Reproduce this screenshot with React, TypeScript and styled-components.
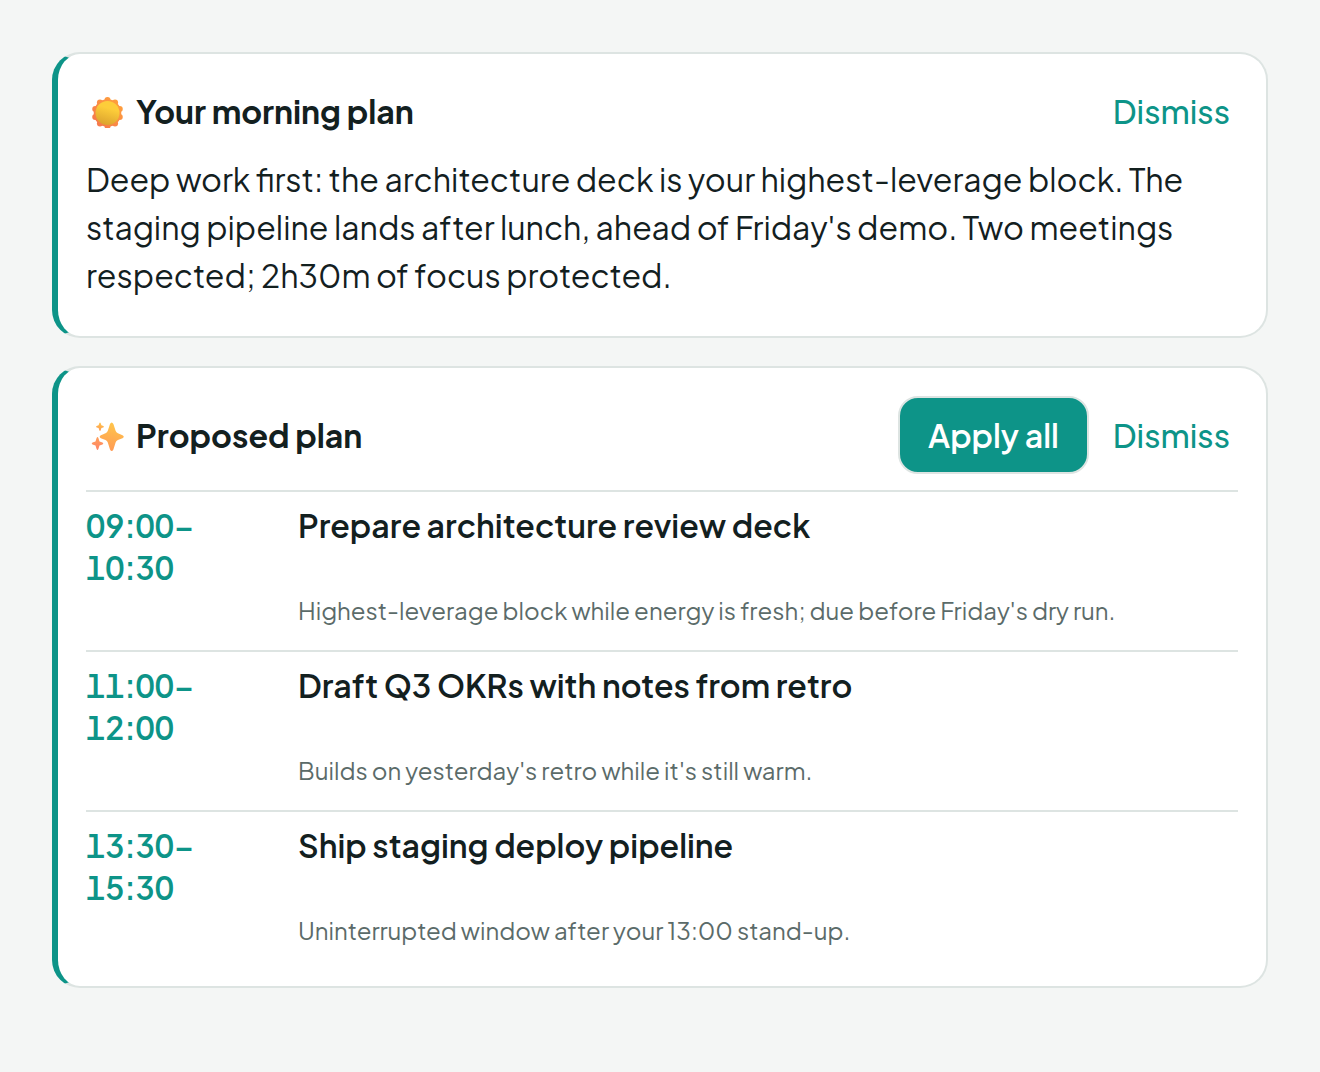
import React from "react";
import styled, { createGlobalStyle } from "styled-components";

const GlobalStyle = createGlobalStyle`
  *, *::before, *::after { box-sizing: border-box; }
  body {
    margin: 0;
    background: #f4f6f5;
    color: #13201f;
    font-family: "Plus Jakarta Sans", Lato, "Open Sans", sans-serif;
    font-size: 32px;
  }
  h2, h3, p, ul { margin: 0; padding: 0; }
`;

const Page = styled.main`
  display: flex;
  flex-direction: column;
  gap: 28px;
  padding: 52px;
`;

const Card = styled.section`
  padding: 28px 28px 16px;
  background: #ffffff;
  border: 2px solid #dde4e2;
  border-left: 6px solid #0d9488;
  border-radius: 28px;
`;

const Header = styled.header`
  display: flex;
  align-items: center;
  gap: 16px;
  padding-left: 4px;
`;

const Title = styled.h2`
  display: flex;
  flex: 1;
  align-items: center;
  gap: 12px;
  font-size: 32px;
  font-weight: 700;
  line-height: 42px;
`;

const Icon = styled.svg`
  flex: none;
  width: 34px;
  height: 34px;
`;

const Button = styled.button<{ $primary?: boolean }>`
  padding: ${(p) => (p.$primary ? "16px 28px" : "8px")};
  font: inherit;
  font-weight: ${(p) => (p.$primary ? 600 : 500)};
  line-height: 42px;
  color: ${(p) => (p.$primary ? "#ffffff" : "#0d9488")};
  background: ${(p) => (p.$primary ? "#0d9488" : "transparent")};
  border: ${(p) => (p.$primary ? "2px solid #dde4e2" : "none")};
  border-radius: 20px;
  cursor: pointer;
`;

const Summary = styled.p`
  margin-top: 15px;
  padding-bottom: 21px;
  line-height: 48px;
`;

const PlanList = styled.ul`
  margin-top: 16px;
  list-style: none;
`;

const PlanItem = styled.li`
  display: grid;
  grid-template-columns: 192px 1fr;
  column-gap: 20px;
  row-gap: 4px;
  padding: 12px 0 22px;
  border-top: 2px solid #dde4e2;
`;

const Time = styled.time`
  font-weight: 600;
  font-variant-numeric: tabular-nums;
  line-height: 42px;
  color: #0d9488;
`;

const TaskName = styled.h3`
  font-size: 32px;
  font-weight: 600;
  line-height: 42px;
`;

const Reason = styled.p`
  grid-column: 2;
  font-size: 24px;
  line-height: 36px;
  color: #5b6b69;
`;

function SunIcon() {
  const petals = Array.from({ length: 10 }, (_, i) => (i * Math.PI) / 5);
  return (
    <Icon viewBox="0 0 34 34" aria-hidden="true">
      <defs>
        <linearGradient
          id="sunRay"
          gradientUnits="userSpaceOnUse"
          x1="28"
          y1="6"
          x2="6"
          y2="28"
        >
          <stop offset="0" stopColor="#ffa03c" />
          <stop offset="1" stopColor="#f67a4c" />
        </linearGradient>
        <linearGradient id="sunFace" x1="0.65" y1="0" x2="0.35" y2="1">
          <stop offset="0.3" stopColor="#fdcd3a" />
          <stop offset="1" stopColor="#dba22e" />
        </linearGradient>
      </defs>
      <g fill="url(#sunRay)">
        <circle cx="17.5" cy="19" r="13.8" />
        {petals.map((a) => (
          <circle key={a} cx={17.5 + 12.9 * Math.sin(a)} cy={19 - 12.9 * Math.cos(a)} r="3" />
        ))}
      </g>
      <circle cx="17.5" cy="19" r="12" fill="url(#sunFace)" />
    </Icon>
  );
}

function SparklesIcon() {
  return (
    <Icon viewBox="0 0 34 34" aria-hidden="true">
      <defs>
        <linearGradient id="spark" x1="0.6" y1="0" x2="0.4" y2="1">
          <stop offset="0" stopColor="#ffc64a" />
          <stop offset="1" stopColor="#ff9a55" />
        </linearGradient>
        <linearGradient id="sparkSmall" x1="0.5" y1="0" x2="0.5" y2="1">
          <stop offset="0" stopColor="#ffa05a" />
          <stop offset="1" stopColor="#ff8468" />
        </linearGradient>
      </defs>
      <g fill="url(#spark)">
        <path d="M20 6Q21.700 3 23.400 6L25.600 12.800Q26.200 14.500 27.900 15.300L32.500 17.200Q35 18.700 32.500 20.200L27.900 22Q26.200 22.900 25.600 24.600L23.400 31.400Q21.700 34.400 20 31.400L17.800 24.600Q17.200 22.900 15.500 22L10.900 20.200Q8.400 18.700 10.900 17.200L15.500 15.300Q17.200 14.500 17.800 12.800Z" />
        <path d="M9.300 5.200Q10 3.800 10.700 5.200L11.400 7.300L13.300 8Q14.700 8.700 13.300 9.400L11.400 10.100L10.700 12.200Q10 13.600 9.300 12.200L8.600 10.100L6.700 9.400Q5.300 8.700 6.700 8L8.600 7.300Z" />
      </g>
      <path
        fill="url(#sparkSmall)"
        d="M6.600 20Q7.500 18.200 8.400 20L9.500 23.400L12.500 24.600Q14.200 25.500 12.500 26.400L9.500 27.600L8.400 31Q7.500 32.800 6.600 31L5.500 27.600L2.500 26.400Q0.800 25.500 2.500 24.600L5.500 23.400Z"
      />
    </Icon>
  );
}

const plan = [
  {
    start: "09:00",
    end: "10:30",
    task: "Prepare architecture review deck",
    reason: "Highest-leverage block while energy is fresh; due before Friday's dry run.",
  },
  {
    start: "11:00",
    end: "12:00",
    task: "Draft Q3 OKRs with notes from retro",
    reason: "Builds on yesterday's retro while it's still warm.",
  },
  {
    start: "13:30",
    end: "15:30",
    task: "Ship staging deploy pipeline",
    reason: "Uninterrupted window after your 13:00 stand-up.",
  },
];

export default function App() {
  return (
    <>
      <GlobalStyle />
      <Page>
        <Card>
          <Header>
            <Title>
              <SunIcon />
              Your morning plan
            </Title>
            <Button type="button">Dismiss</Button>
          </Header>
          <Summary>
            Deep work first: the architecture deck is your highest-leverage block. The staging
            pipeline lands after lunch, ahead of Friday's demo. Two meetings respected; 2h30m of
            focus protected.
          </Summary>
        </Card>
        <Card>
          <Header>
            <Title>
              <SparklesIcon />
              Proposed plan
            </Title>
            <Button type="button" $primary>
              Apply all
            </Button>
            <Button type="button">Dismiss</Button>
          </Header>
          <PlanList>
            {plan.map((item) => (
              <PlanItem key={item.start}>
                <Time>
                  {item.start}–<br />
                  {item.end}
                </Time>
                <TaskName>{item.task}</TaskName>
                <Reason>{item.reason}</Reason>
              </PlanItem>
            ))}
          </PlanList>
        </Card>
      </Page>
    </>
  );
}
